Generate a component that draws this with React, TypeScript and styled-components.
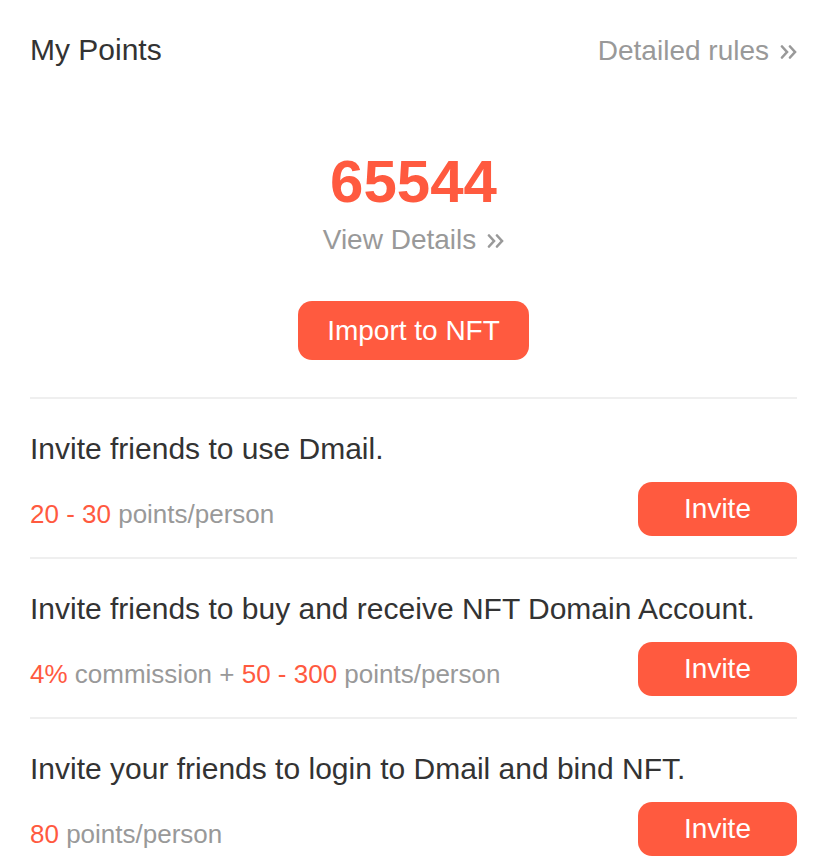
import styled, { createGlobalStyle } from 'styled-components';

const GlobalStyle = createGlobalStyle`
    body {
        margin: 0;
        background: #ffffff;
        font-family: "Liberation Sans", Arial, sans-serif;
    }
`;

const tasks = [
    {
        id: 1,
        title: 'Invite friends to use Dmail.',
        reward: [
            { text: '20 - 30', hot: true },
            { text: ' points/person', hot: false },
        ],
    },
    {
        id: 2,
        title: 'Invite friends to buy and receive NFT Domain Account.',
        reward: [
            { text: '4%', hot: true },
            { text: ' commission + ', hot: false },
            { text: '50 - 300', hot: true },
            { text: ' points/person', hot: false },
        ],
    },
    {
        id: 3,
        title: 'Invite your friends to login to Dmail and bind NFT.',
        reward: [
            { text: '80', hot: true },
            { text: ' points/person', hot: false },
        ],
    },
];

function Chevrons() {
    return (
        <svg width={17} height={14} viewBox="0 0 17 14" fill="none">
            <polyline points="2,1.5 7,7 2,12.5" stroke="currentColor" strokeWidth="2.6" strokeLinecap="round" strokeLinejoin="miter" />
            <polyline points="10,1.5 15,7 10,12.5" stroke="currentColor" strokeWidth="2.6" strokeLinecap="round" strokeLinejoin="miter" />
        </svg>
    );
}

export default function App() {
    return (
        <Page>
            <GlobalStyle />
            <Header>
                <Title>My Points</Title>
                <LinkText>
                    Detailed rules
                    <Chevrons />
                </LinkText>
            </Header>

            <Summary>
                <Total>65544</Total>
                <DetailsLink>
                    View Details
                    <Chevrons />
                </DetailsLink>
                <PrimaryButton>Import to NFT</PrimaryButton>
            </Summary>

            {tasks.map((task) => (
                <TaskRow key={task.id}>
                    <TaskTitle>{task.title}</TaskTitle>
                    <TaskFooter>
                        <Reward>
                            {task.reward.map((part, i) => (
                                <RewardPart key={i} $hot={part.hot}>{part.text}</RewardPart>
                            ))}
                        </Reward>
                        <InviteButton>Invite</InviteButton>
                    </TaskFooter>
                </TaskRow>
            ))}
        </Page>
    );
}

const Page = styled.div`
    padding: 30px 30px 0;
    color: #333333;
`;

const Header = styled.div`
    display: flex;
    justify-content: space-between;
    align-items: baseline;
    height: 40px;
`;

const Title = styled.h1`
    margin: 0;
    font-size: 30px;
    font-weight: 400;
    line-height: 40px;
    color: #333333;
`;

const LinkText = styled.div`
    display: flex;
    align-items: center;
    gap: 11px;
    font-size: 28px;
    line-height: 40px;
    color: #999999;

    svg {
        margin-top: 2px;
    }
`;

const Summary = styled.div`
    display: flex;
    flex-direction: column;
    align-items: center;
    padding: 77px 0 37px;
    border-bottom: 2px solid #efefef;
`;

const Total = styled.div`
    font-size: 60px;
    font-weight: 700;
    line-height: 70px;
    color: #ff5a3f;
`;

const DetailsLink = styled.div`
    display: flex;
    align-items: center;
    gap: 11px;
    margin-top: 5px;
    font-size: 28px;
    line-height: 36px;
    color: #999999;

    svg {
        margin-top: 2px;
    }
`;

const PrimaryButton = styled.button`
    margin-top: 43px;
    width: 231px;
    height: 59px;
    border: none;
    border-radius: 14px;
    background: #ff5a3f;
    color: #ffffff;
    font-family: inherit;
    font-size: 28px;
    padding: 0;
`;

const TaskRow = styled.div`
    padding: 30px 0 21px;
    border-bottom: 2px solid #efefef;

    &:last-child {
        border-bottom: none;
    }
`;

const TaskTitle = styled.div`
    font-size: 30px;
    line-height: 40px;
    color: #333333;
`;

const TaskFooter = styled.div`
    margin-top: 13px;
    display: flex;
    justify-content: space-between;
    align-items: center;
`;

const Reward = styled.div`
    padding-top: 10px;
    font-size: 26px;
    line-height: 36px;
`;

const RewardPart = styled.span<{ $hot: boolean }>`
    color: ${(p) => (p.$hot ? '#ff5a3f' : '#999999')};
`;

const InviteButton = styled.button`
    width: 159px;
    height: 54px;
    border: none;
    border-radius: 14px;
    background: #ff5a3f;
    color: #ffffff;
    font-family: inherit;
    font-size: 28px;
    padding: 0;
`;
